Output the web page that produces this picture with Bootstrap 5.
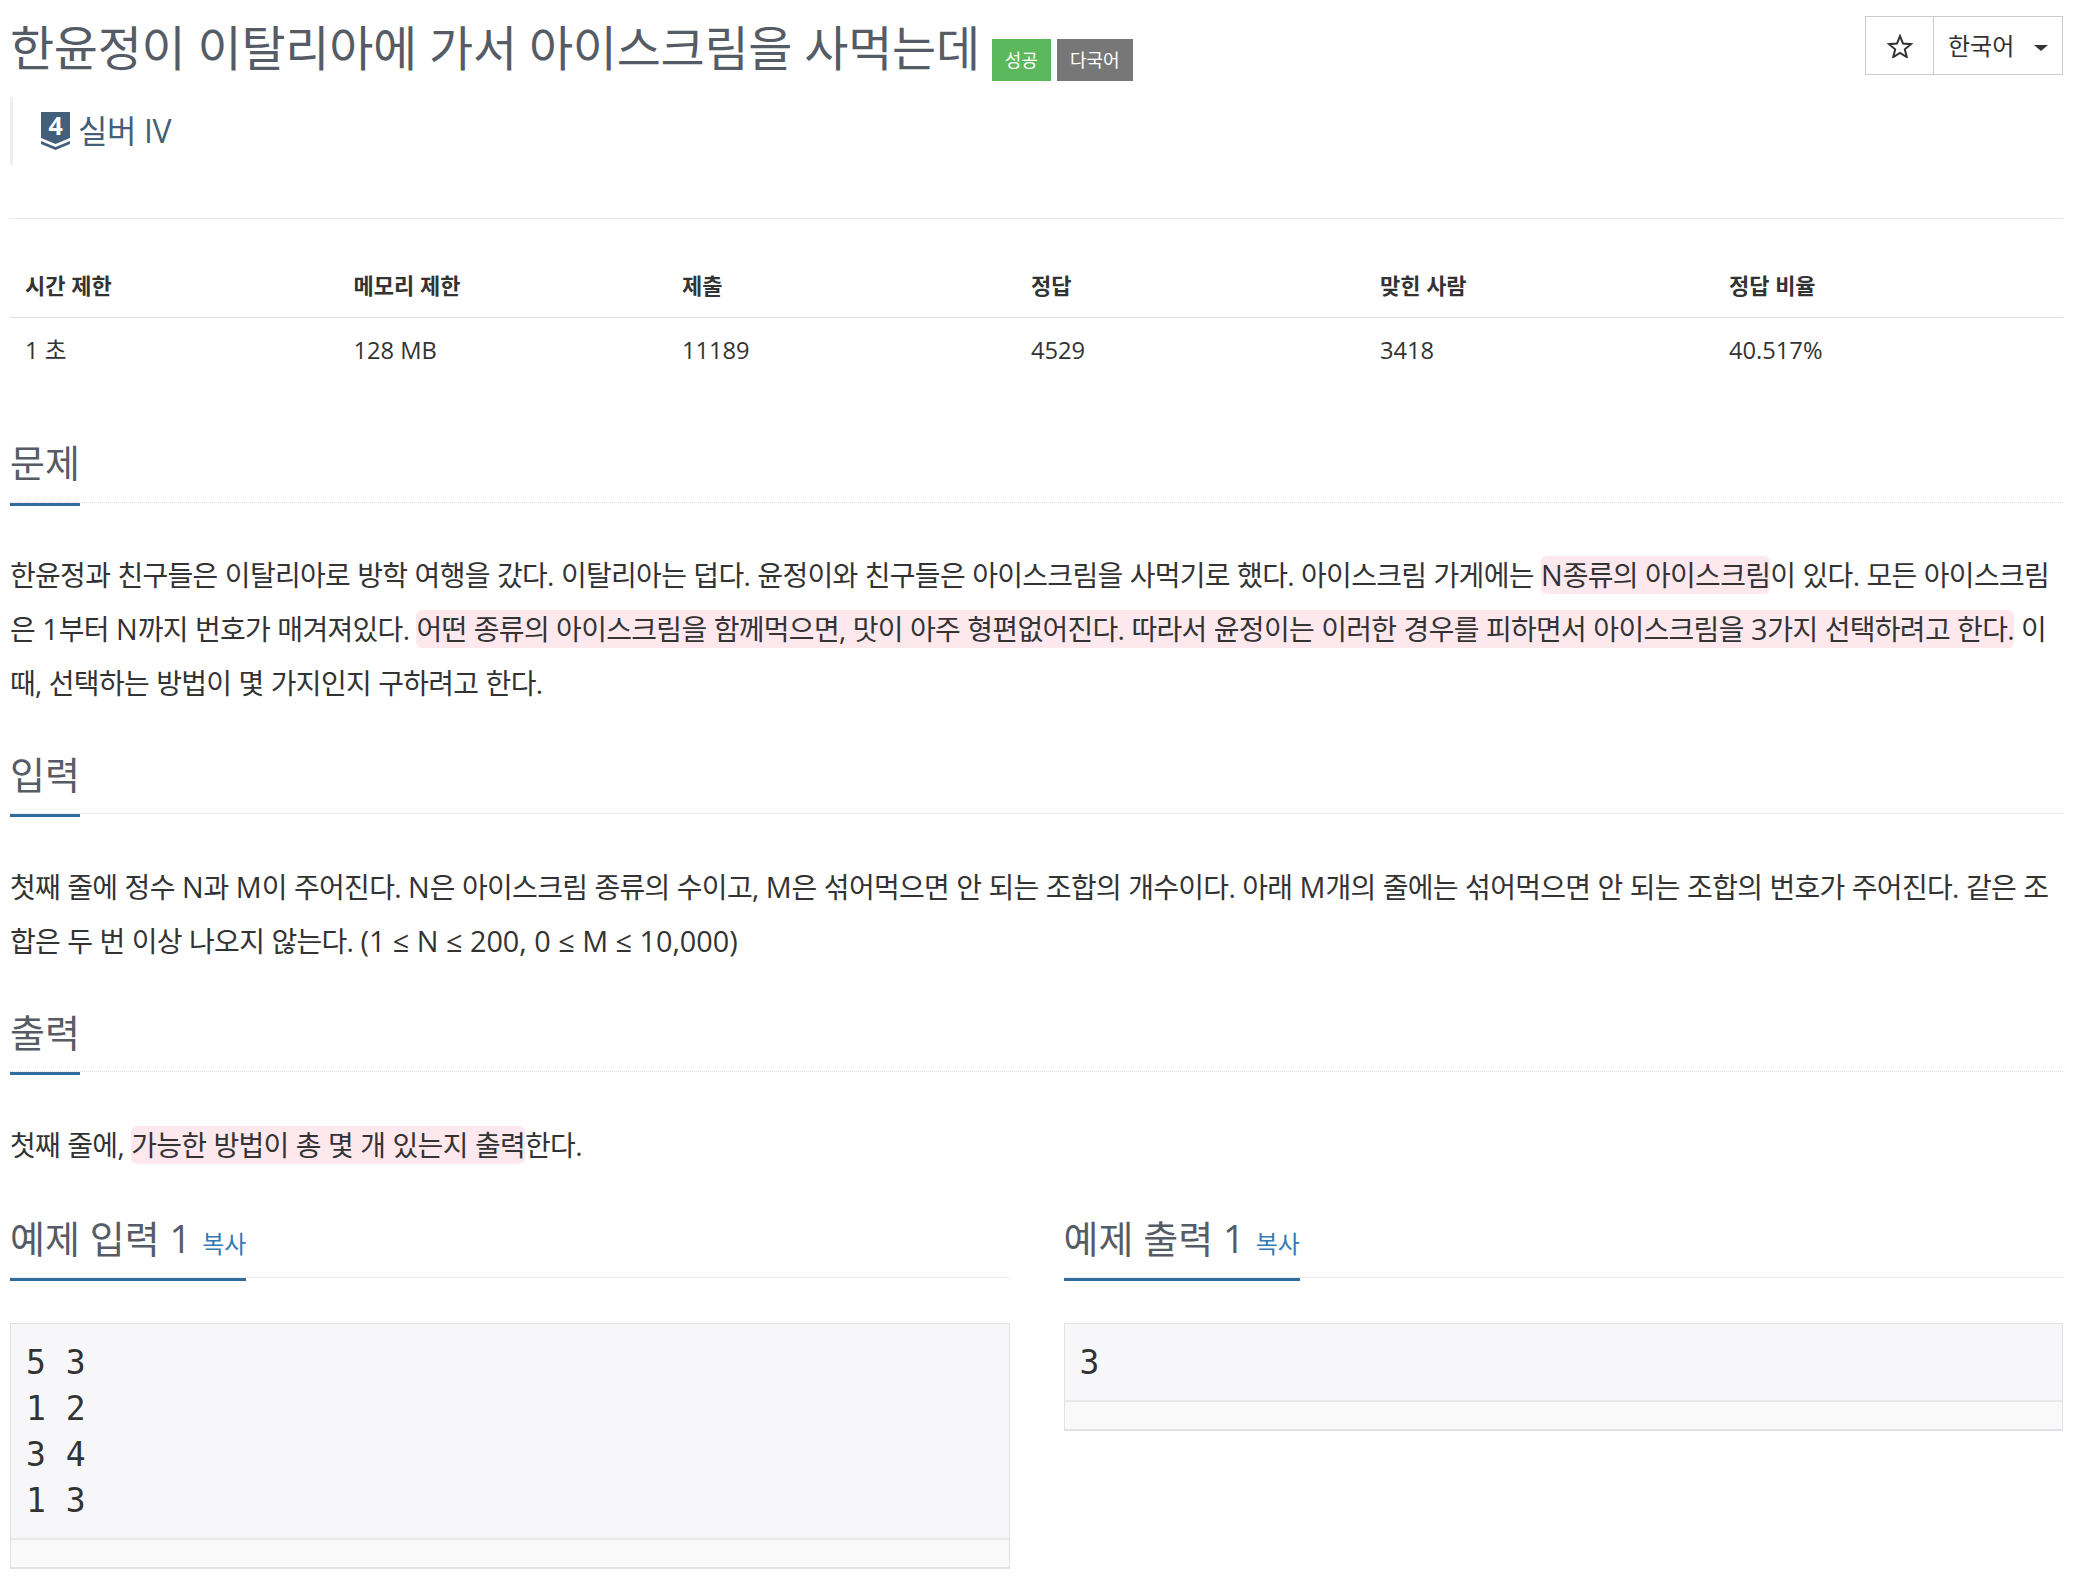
<!DOCTYPE html>
<html lang="ko"><head><meta charset="utf-8">
<title>한윤정이 이탈리아에 가서 아이스크림을 사먹는데</title>
<link href="https://cdn.jsdelivr.net/npm/bootstrap@5.3.0/dist/css/bootstrap.min.css" rel="stylesheet">
<style>
html,body{background:#fff}
body{font-family:"Open Sans","Noto Sans CJK KR",sans-serif;color:#333;font-size:24px;line-height:54px}
.page-wrap{padding:0 15px 0 10px;height:1578px;overflow:hidden}
.title-row{height:97px}
.prob-title{font-size:48px;letter-spacing:-.3px;font-weight:400;color:#565c66;line-height:60px;margin:18px 0 0;font-family:inherit}
.tag-ok,.tag-multi{display:inline-block;font-size:18px;letter-spacing:0;font-weight:400;line-height:42px;height:42px;color:#fff;text-align:center;vertical-align:-1px;border-radius:0;padding:0}
.tag-ok{background:#5cb85c;width:59px;margin-left:12px}
.tag-multi{background:#777;width:76px;margin-left:6px}
.tool-group{height:59px;width:198px;margin-top:16px;border:1px solid #ccc;color:#333}
.tool-star{width:68px;border-right:1px solid #ccc}
.tool-lang{flex:1;padding-left:14px;font-size:24px;line-height:50px}
.tool-caret{width:0;height:0;border-top:6px solid #333;border-left:7px solid transparent;border-right:7px solid transparent;margin-left:auto;margin-right:14px;margin-top:4px}
.rating-box{border-left:3px solid #eee;height:68px;padding-left:28px;color:#435f7a;font-size:32px;letter-spacing:-.4px;line-height:68px;gap:8px}
.rule-top{height:1px;background:#e8e8e8;margin-top:53px}
.stat-table{margin:37px 0 0;table-layout:fixed;width:100%;--bs-table-color:#333}
.stat-table th{font-size:22px;font-weight:700;padding:0 15px 3px;height:61px;border-bottom:1px solid #ddd;vertical-align:middle;line-height:30px}
.stat-table td{font-size:23.700px;padding:0 15px 2px;height:67px;border:0;vertical-align:middle;line-height:30px}
.sec-head{position:relative;border-bottom:1px dotted #ddd;height:66px;margin-top:38px;margin-bottom:46px}
.sec-first{margin-top:53px;margin-bottom:45px}
.sample-row .sec-head{margin-top:40px;margin-bottom:45px}
.sec-head h2{display:inline-block;font-size:38px;font-weight:400;color:#565c66;line-height:52px;margin:0;height:69px;border-bottom:3px solid #2f6d9e;font-family:inherit;vertical-align:top}
.sec-first h2{line-height:51px}
.sec-head a{font-size:24px;color:#337ab7;text-decoration:none;margin-left:1px}
.sec-body{margin:0;word-break:break-all;font-size:28px;letter-spacing:-.7px;word-spacing:.6px}
.ltn{font-size:28.800px;letter-spacing:0;word-spacing:0}
.hl{background:#fde8ee;border-radius:6px}
.sample-row{--bs-gutter-x:54px;margin-top:0}
.sample-box{background:#f7f7f9;border:1px solid #e1e1e8;margin:0}
.sample-box pre{margin:0;padding:16px 15px 0;font-family:"DejaVu Sans Mono",monospace;font-size:33px;line-height:46px;color:#333;height:214px;overflow:hidden}
.sample-box.one pre{height:76px}
.sample-foot{height:30px;background:#f9f9f9;border-top:2px solid #e9e9e9;border-bottom:1px solid #e1e1e8}
</style></head><body>
<div class="page-wrap">
  <div class="d-flex justify-content-between title-row">
    <h1 class="prob-title">한윤정이 이탈리아에 가서 아이스크림을 사먹는데<span class="tag-ok">성공</span><span class="tag-multi">다국어</span></h1>
    <div class="d-flex tool-group">
      <div class="tool-star d-flex align-items-center justify-content-center">
        <svg width="26" height="24" viewBox="0 0 26 24"><path d="M13 2l3 7.6 8 .6-6.2 5.1 2 7.8L13 19l-6.8 4.100 2-7.800L2 10.200l8-.6z" fill="none" stroke="#333" stroke-width="2"/></svg>
      </div>
      <div class="tool-lang d-flex align-items-center">한국어<span class="tool-caret"></span></div>
    </div>
  </div>
  <div class="rating-box d-flex align-items-center">
    <svg width="29" height="38" viewBox="0 0 29 38"><path d="M0 0h29v26l-14.500 6L0 26z" fill="#435f7a"/><path d="M0 29l14.500 6 14.500-6v3l-14.500 6L0 32z" fill="#435f7a"/><text x="14.500" y="23" font-size="25" font-weight="700" fill="#fff" text-anchor="middle" font-family="Open Sans">4</text></svg>
    <span>실버 IV</span>
  </div>
  <div class="rule-top"></div>
  <table class="table stat-table">
    <colgroup><col style="width:16%"><col style="width:16%"><col style="width:17%"><col style="width:17%"><col style="width:17%"><col style="width:17%"></colgroup>
    <thead><tr><th>시간 제한</th><th>메모리 제한</th><th>제출</th><th>정답</th><th>맞힌 사람</th><th>정답 비율</th></tr></thead>
    <tbody><tr><td>1 초</td><td>128 MB</td><td>11189</td><td>4529</td><td>3418</td><td>40.517%</td></tr></tbody>
  </table>
  <div class="sec-head sec-first"><h2>문제</h2></div>
  <p class="sec-body">한윤정과 친구들은 이탈리아로 방학 여행을 갔다. 이탈리아는 덥다. 윤정이와 친구들은 아이스크림을 사먹기로 했다. 아이스크림 가게에는 <span class="hl"><span class="ltn">N</span>종류의 아이스크림</span>이 있다. 모든 아이스크림은 <span class="ltn">1</span>부터 <span class="ltn">N</span>까지 번호가 매겨져있다. <span class="hl">어떤 종류의 아이스크림을 함께먹으면, 맛이 아주 형편없어진다. 따라서 윤정이는 이러한 경우를 피하면서 아이스크림을 <span class="ltn">3</span>가지 선택하려고 한다.</span> 이때, 선택하는 방법이 몇 가지인지 구하려고 한다.</p>
  <div class="sec-head"><h2>입력</h2></div>
  <p class="sec-body">첫째 줄에 정수 <span class="ltn">N</span>과 <span class="ltn">M</span>이 주어진다. <span class="ltn">N</span>은 아이스크림 종류의 수이고, <span class="ltn">M</span>은 섞어먹으면 안 되는 조합의 개수이다. 아래 <span class="ltn">M</span>개의 줄에는 섞어먹으면 안 되는 조합의 번호가 주어진다. 같은 조합은 두 번 이상 나오지 않는다. <span class="ltn">(1 ≤ N ≤ 200, 0 ≤ M ≤ 10,000)</span></p>
  <div class="sec-head"><h2>출력</h2></div>
  <p class="sec-body">첫째 줄에, <span class="hl">가능한 방법이 총 몇 개 있는지 출력</span>한다.</p>
  <div class="row sample-row">
    <div class="col-6">
      <div class="sec-head"><h2>예제 입력 1 <a href="#">복사</a></h2></div>
      <div class="sample-box"><pre>5 3
1 2
3 4
1 3</pre><div class="sample-foot"></div></div>
    </div>
    <div class="col-6">
      <div class="sec-head"><h2>예제 출력 1 <a href="#">복사</a></h2></div>
      <div class="sample-box one"><pre>3</pre><div class="sample-foot"></div></div>
    </div>
  </div>
</div>
<script src="https://cdn.jsdelivr.net/npm/bootstrap@5.3.0/dist/js/bootstrap.bundle.min.js"></script>
</body></html>
